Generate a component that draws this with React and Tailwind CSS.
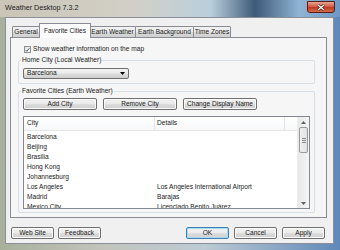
const cities = [
  ["Barcelona", ""],
  ["Beijing", ""],
  ["Brasilia", ""],
  ["Hong Kong", ""],
  ["Johannesburg", ""],
  ["Los Angeles", "Los Angeles International Airport"],
  ["Madrid", "Barajas"],
  ["Mexico City", "Licenciado Benito Juárez"],
];

const Btn = ({ children, w = "w-[43px]", focus }) => (
  <div
    className={`${w} h-[12px] flex items-center justify-center rounded-[2px] border ${
      focus ? "border-[#3c7fb1] shadow-[inset_0_0_0_1px_#a8dcf5]" : "border-[#707070] shadow-[inset_0_0_0_1px_#fcfcfc]"
    } bg-[linear-gradient(#f2f2f2,#ebebeb_48%,#dddddd_52%,#cfcfcf)] text-[6.6px] leading-none text-[#1a1a1a]`}
  >
    {children}
  </div>
);

const Tab = ({ children, w, active }) =>
  active ? (
    <div
      className={`${w} h-[15px] -mx-[1px] z-10 flex items-center justify-center border border-b-0 border-[#898c95] bg-[#fcfcfc] text-[6.6px] leading-none rounded-t-[1px]`}
    >
      {children}
    </div>
  ) : (
    <div
      className={`${w} h-[12px] flex items-center justify-center whitespace-nowrap border border-[#898c95] -ml-px first:ml-0 bg-[linear-gradient(#f2f2f2,#ebebeb_50%,#dddddd_50%,#cfcfcf)] text-[6.6px] leading-none rounded-t-[1px]`}
    >
      {children}
    </div>
  );

export default function App() {
  return (
    <div className="w-[340px] h-[250px] overflow-hidden flex flex-col bg-[linear-gradient(90deg,#a8b09c,#c2c4bc_30%,#bccbd4_60%,#5f88b8)] font-['Liberation_Sans',Arial,sans-serif] text-[#1a1a1a]">
      {/* title bar */}
      <div className="h-[17px] flex items-start bg-[linear-gradient(90deg,#cbc5b7,#d2d0c8_40%,#b9cfdc_62%,#3d5a78_75%,#8fb4d4_88%,#6e98c4)]">
        <span className="ml-[5px] mt-[4px] text-[7.2px] leading-none text-[#1b1b1b]">Weather Desktop 7.3.2</span>
        <div className="ml-auto mr-[5px] mt-[1px] w-[28px] h-[12px] rounded-b-[3px] border border-[#5a1e16] bg-[linear-gradient(#e8a593,#d4553f_50%,#c03b22_55%,#d86a4a)] flex items-center justify-center">
          <svg width="8" height="7" viewBox="0 0 8 7">
            <path d="M1 1 L7 6 M7 1 L1 6" stroke="#3a1a14" strokeWidth="2.4" />
            <path d="M1 1 L7 6 M7 1 L1 6" stroke="#fff" strokeWidth="1.4" />
          </svg>
        </div>
      </div>

      {/* client */}
      <div className="ml-[5px] mr-[6px] h-[227px] bg-[#f0f0f0] border border-[#8a8f99] flex flex-col">
        {/* tabs */}
        <div className="mt-[5px] ml-[6px] flex items-end h-[15px] relative z-10 -mb-px">
          <Tab w="w-[28px]">General</Tab>
          <Tab w="w-[52px]" active>Favorite Cities</Tab>
          <Tab w="w-[47px]">Earth Weather</Tab>
          <Tab w="w-[59px]">Earth Background</Tab>
          <Tab w="w-[38px]">Time Zones</Tab>
        </div>

        {/* panel */}
        <div className="ml-[4px] mr-[6px] h-[181px] border border-[#898c95] bg-[#f6f6f6] flex flex-col">
          <div className="mt-[8px] ml-[13px] flex items-center gap-[2px]">
            <div className="w-[7px] h-[7px] border border-[#8e8f8f] bg-[linear-gradient(135deg,#e0e0e0,#fdfdfd)] flex items-center justify-center">
              <svg width="6" height="6" viewBox="0 0 6 6">
                <path d="M0.8 3 L2.3 4.6 L5.3 0.8" fill="none" stroke="#4a5f8c" strokeWidth="1.2" />
              </svg>
            </div>
            <span className="text-[6.6px] leading-none">Show weather information on the map</span>
          </div>

          <fieldset className="mt-[3px] ml-[7px] mr-[11px] border border-[#d5dfe5] rounded-[2px] pb-[4px]">
            <legend className="ml-[2px] px-[1px] text-[6.6px] leading-[8px]">Home City (Local Weather)</legend>
            <div className="mt-[4px] ml-[4px] w-[106px] h-[11px] rounded-[2px] border border-[#707070] bg-[linear-gradient(#f2f2f2,#ebebeb_48%,#dddddd_52%,#cfcfcf)] flex items-center pl-[3px] pr-[3px]">
              <span className="text-[6.6px] leading-none">Barcelona</span>
              <svg className="ml-auto" width="5" height="3" viewBox="0 0 5 3">
                <path d="M0 0 H5 L2.5 3 Z" fill="#000" />
              </svg>
            </div>
          </fieldset>

          <fieldset className="mt-[3px] ml-[7px] mr-[11px] border border-[#d5dfe5] rounded-[2px] pb-[3px] pr-[4px]">
            <legend className="ml-[2px] px-[1px] text-[6.6px] leading-[8px]">Favorite Cities (Earth Weather)</legend>
            <div className="mt-[3px] ml-[4px] flex gap-[6px]">
              <Btn w="w-[74px]">Add City</Btn>
              <Btn w="w-[74px]">Remove City</Btn>
              <Btn w="w-[74px]">Change Display Name</Btn>
            </div>
            <div className="mt-[6px] ml-[4px] h-[93px] border border-[#828790] bg-white flex overflow-hidden">
              <div className="flex-1 flex flex-col overflow-hidden">
                <div className="h-[14px] shrink-0 flex items-center border-b border-[#e5e5e5] bg-[linear-gradient(#ffffff,#f7f8fa)] text-[6.6px] leading-none">
                  <div className="w-[131px] pl-[3px] h-full flex items-center border-r border-[#e5e5e5]">City</div>
                  <div className="w-[130px] pl-[2px] h-full flex items-center border-r border-[#e5e5e5]">Details</div>
                </div>
                <div className="pt-[1px] flex flex-col">
                  {cities.map(([c, d]) => (
                    <div key={c} className="h-[10px] shrink-0 flex items-center text-[6.6px] leading-none">
                      <div className="w-[131px] pl-[3px]">{c}</div>
                      <div className="pl-[2px] whitespace-nowrap">{d}</div>
                    </div>
                  ))}
                </div>
              </div>
              <div className="w-[12px] shrink-0 flex flex-col bg-[linear-gradient(90deg,#e8e8e8,#f5f5f5)] border-l border-[#ececec]">
                <div className="h-[10px] flex items-center justify-center">
                  <svg width="5" height="3" viewBox="0 0 5 3">
                    <path d="M0 3 H5 L2.5 0 Z" fill="#606060" />
                  </svg>
                </div>
                <div className="mx-[1px] h-[26px] rounded-[2px] border border-[#9a9a9a] bg-[linear-gradient(90deg,#f0f0f0,#e2e2e2)] flex flex-col items-center justify-center gap-[1px]">
                  <div className="w-[4px] h-px bg-[#8a8a8a]" />
                  <div className="w-[4px] h-px bg-[#8a8a8a]" />
                  <div className="w-[4px] h-px bg-[#8a8a8a]" />
                </div>
                <div className="mt-auto h-[10px] flex items-center justify-center">
                  <svg width="5" height="3" viewBox="0 0 5 3">
                    <path d="M0 0 H5 L2.5 3 Z" fill="#606060" />
                  </svg>
                </div>
              </div>
            </div>
          </fieldset>
        </div>

        {/* bottom buttons */}
        <div className="mt-[9px] ml-[5px] mr-[8px] flex">
          <div className="flex gap-[4px]">
            <Btn>Web Site</Btn>
            <Btn>Feedback</Btn>
          </div>
          <div className="ml-auto flex gap-[5px]">
            <Btn focus>OK</Btn>
            <Btn>Cancel</Btn>
            <Btn>Apply</Btn>
          </div>
        </div>
      </div>
    </div>
  );
}
